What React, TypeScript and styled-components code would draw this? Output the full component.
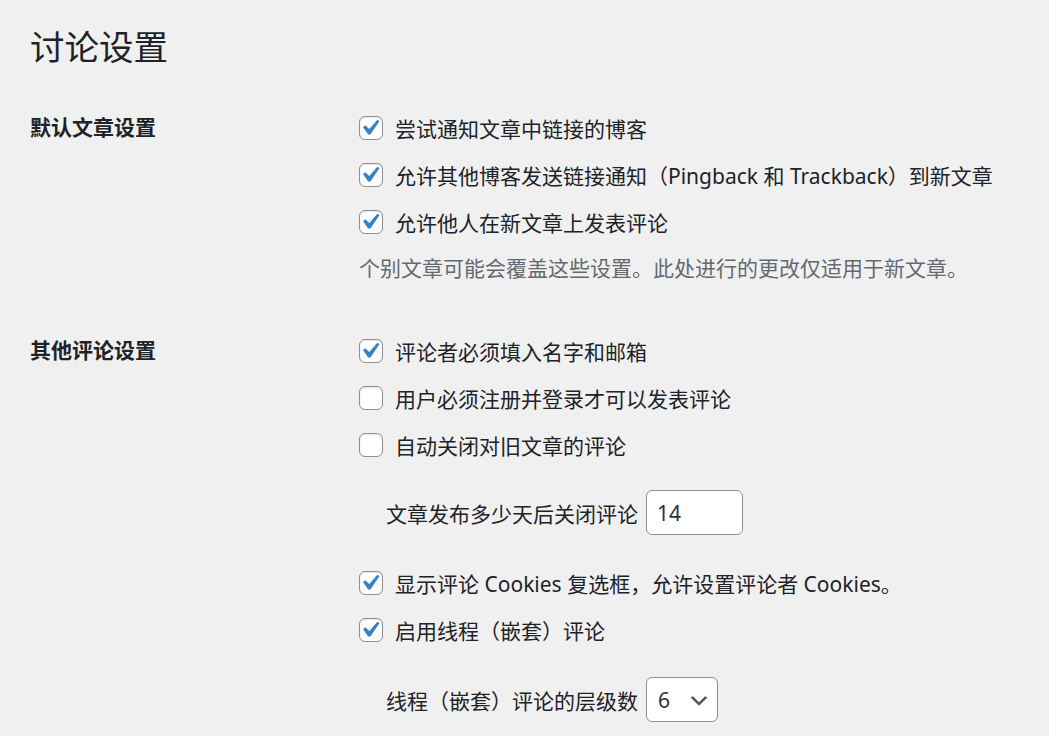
import React from 'react';
import styled, { createGlobalStyle } from 'styled-components';

const GlobalStyle = createGlobalStyle`
    html, body {
        margin: 0;
        padding: 0;
        background: #f0f0f1;
    }
    body {
        font-family: "Noto Sans", "Noto Sans CJK SC", sans-serif;
        color: #1d2327;
        font-size: 21px;
    }
`

const Wrap = styled.div`
    padding: 24px 30px 0;
`

const Title = styled.h1`
    margin: 0;
    font-size: 34.5px;
    line-height: 45px;
    font-weight: 400;
    color: #1d2327;
`

const FormTable = styled.div`
    display: flex;
    flex-direction: column;
    gap: 35px;
    margin-top: 35px;
`

const Row = styled.div`
    display: grid;
    grid-template-columns: 329px 1fr;
    align-items: start;
`

const RowLabel = styled.div`
    font-weight: 700;
    font-size: 21px;
    line-height: 47px;
    color: #1d2327;
`

const Cell = styled.div`
    display: flex;
    flex-direction: column;
`

const CheckLine = styled.label`
    display: flex;
    align-items: center;
    gap: 12px;
    height: 47px;
    font-size: 21px;
    color: #1d2327;
    white-space: nowrap;
`

const Box = styled.span`
    position: relative;
    flex: none;
    width: 24px;
    height: 24px;
    box-sizing: border-box;
    border: 1.5px solid #8c8f94;
    border-radius: 6px;
    background: #fff;
    box-shadow: inset 0 1px 2px rgba(0, 0, 0, 0.1);

    svg {
        position: absolute;
        left: -6px;
        top: -4.5px;
        width: 31.5px;
        height: 31.5px;
    }
`

const Description = styled.p`
    margin: 0;
    line-height: 47px;
    font-size: 21px;
    color: #646970;
    white-space: nowrap;
`

const FieldLine = styled.div<{ $top: number }>`
    display: flex;
    align-items: center;
    gap: 8px;
    padding-left: 27px;
    margin: ${({ $top }) => $top}px 0 24px;
    font-size: 21px;
    color: #1d2327;
`

const NumberInput = styled.div`
    box-sizing: border-box;
    width: 97px;
    height: 45px;
    padding: 0 10px;
    display: flex;
    align-items: center;
    background: #fff;
    border: 1.5px solid #8c8f94;
    border-radius: 6px;
    color: #2c3338;
    font-size: 21px;
`

const Select = styled.div`
    position: relative;
    box-sizing: border-box;
    width: 72px;
    height: 45px;
    padding: 0 36px 0 11px;
    display: flex;
    align-items: center;
    background: #fff;
    border: 1.5px solid #8c8f94;
    border-radius: 6px;
    color: #2c3338;
    font-size: 21px;

    svg {
        position: absolute;
        right: 6px;
        top: 11px;
        width: 24px;
        height: 24px;
    }
`

const Check = ({ checked, children }: { checked?: boolean; children: React.ReactNode }) => (
    <CheckLine>
        <Box>
            {checked && (
                <svg viewBox="0 0 20 20">
                    <path d="M14.83 4.89l1.34.94-5.81 8.38H9.02L5.78 9.67l1.34-1.25 2.57 2.4z" fill="#3582c4" />
                </svg>
            )}
        </Box>
        {children}
    </CheckLine>
)

const App = () => {
    return (
        <Wrap>
            <GlobalStyle />
            <Title>讨论设置</Title>
            <FormTable>
                <Row>
                    <RowLabel>默认文章设置</RowLabel>
                    <Cell>
                        <Check checked>尝试通知文章中链接的博客</Check>
                        <Check checked>允许其他博客发送链接通知（Pingback 和 Trackback）到新文章</Check>
                        <Check checked>允许他人在新文章上发表评论</Check>
                        <Description>个别文章可能会覆盖这些设置。此处进行的更改仅适用于新文章。</Description>
                    </Cell>
                </Row>
                <Row>
                    <RowLabel>其他评论设置</RowLabel>
                    <Cell>
                        <Check checked>评论者必须填入名字和邮箱</Check>
                        <Check>用户必须注册并登录才可以发表评论</Check>
                        <Check>自动关闭对旧文章的评论</Check>
                        <FieldLine $top={22}>
                            文章发布多少天后关闭评论
                            <NumberInput>14</NumberInput>
                        </FieldLine>
                        <Check checked>显示评论 Cookies 复选框，允许设置评论者 Cookies。</Check>
                        <Check checked>启用线程（嵌套）评论</Check>
                        <FieldLine $top={24}>
                            线程（嵌套）评论的层级数
                            <Select>
                                6
                                <svg viewBox="0 0 20 20">
                                    <path d="M5 6l5 5 5-5 2 1-7 7-7-7 2-1z" fill="#50575e" />
                                </svg>
                            </Select>
                        </FieldLine>
                    </Cell>
                </Row>
            </FormTable>
        </Wrap>
    );
}

export default App;
